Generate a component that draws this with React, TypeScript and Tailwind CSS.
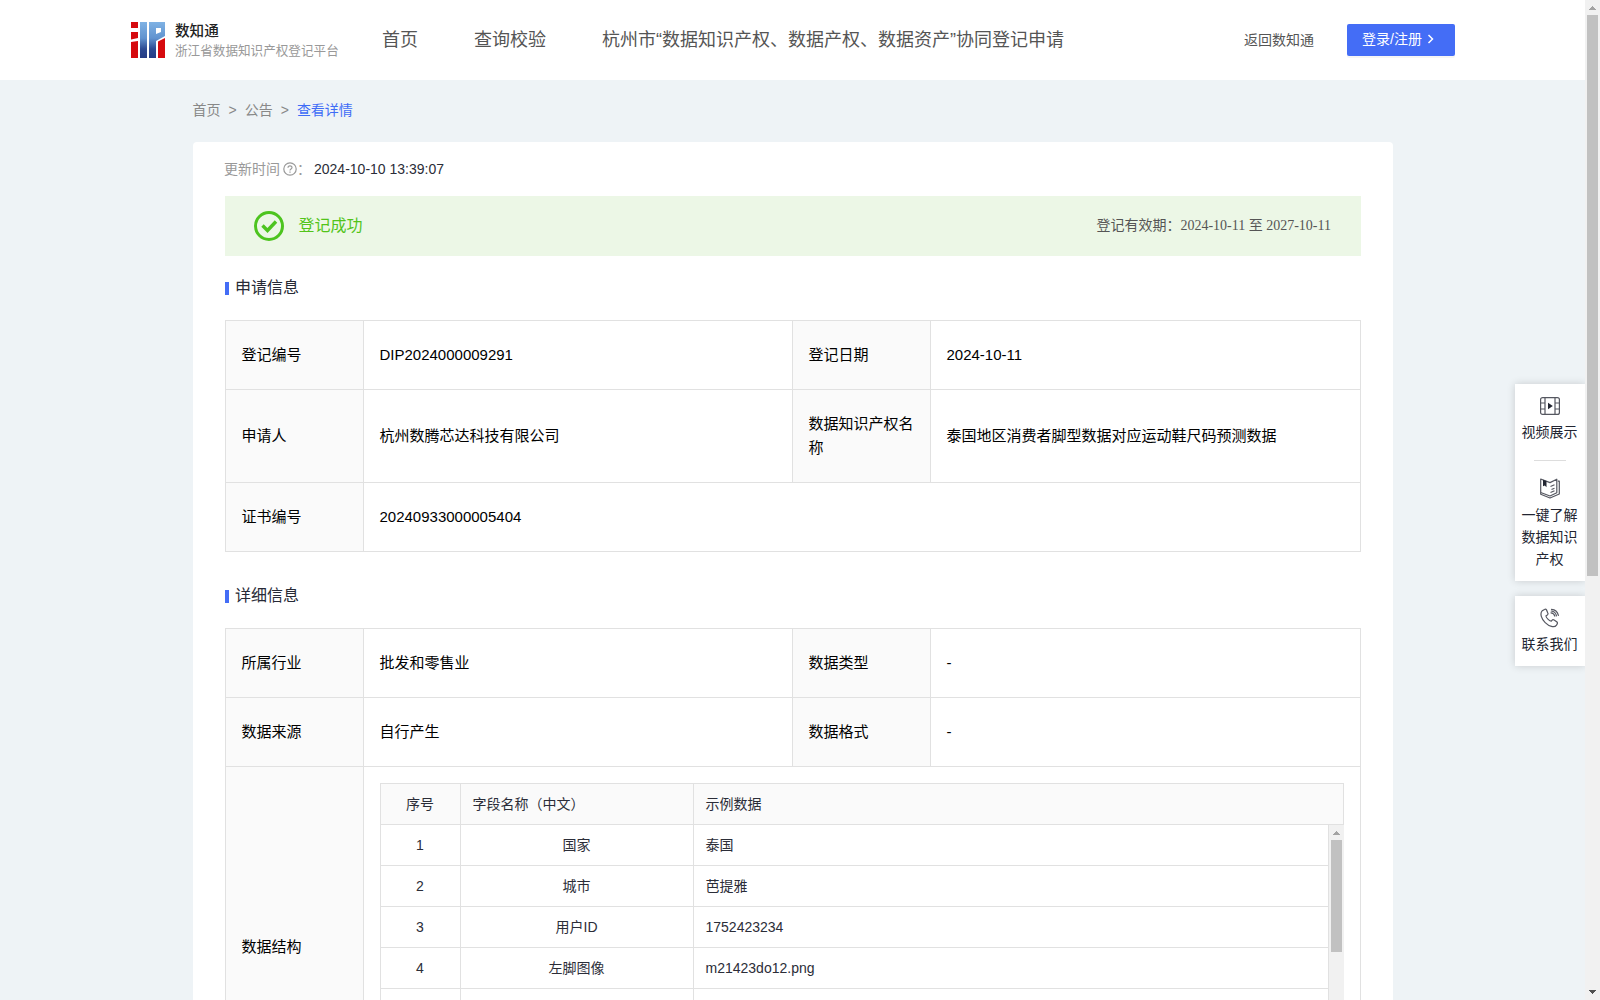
import React from "react";

function Logo() {
  return (
    <svg width="34" height="36" viewBox="0 0 34 36" className="shrink-0">
      <defs>
        <linearGradient id="blue" x1="0" y1="0" x2="0" y2="1">
          <stop offset="0" stopColor="#7fb2e4" />
          <stop offset="0.450" stopColor="#6193cf" />
          <stop offset="0.750" stopColor="#2c4a93" />
          <stop offset="1" stopColor="#253c85" />
        </linearGradient>
      </defs>
      <path d="M0 0h7v6H0zM0 10h7v6l-7 1.500zM0 20l7-1v17H0z" fill="#d60a0e" />
      <path d="M9 0h7v36H9zM18 0h16v14l-9 5v17h-7zM25 6v6l5-2V6z" fill="url(#blue)" fillRule="evenodd" />
      <path d="M27 19.500l7-3.500V36h-7z" fill="#d60a0e" />
    </svg>
  );
}

function Header() {
  return (
    <header className="flex h-20 items-center bg-white pl-[131px] text-[#555]">
      <Logo />
      <div className="mt-px ml-[10px] w-[207px] whitespace-nowrap">
        <div className="text-[14.6px] leading-5 font-medium text-[#222]">数知通</div>
        <div className="text-[12.6px] leading-5 text-[#999]">浙江省数据知识产权登记平台</div>
      </div>
      <nav className="flex w-[862px] gap-[56px] text-lg leading-6 whitespace-nowrap">
        <span>首页</span>
        <span>查询校验</span>
        <span>杭州市“数据知识产权、数据产权、数据资产”协同登记申请</span>
      </nav>
      <span className="-mt-px w-[103px] text-sm">返回数知通</span>
      <button className="flex h-8 w-[108px] items-center rounded-[2px] bg-[#446df6] pb-0.5 pl-[15px] text-sm text-white shadow-[0_2px_0_rgba(0,0,0,0.04)]">
        登录/注册
        <svg width="8" height="10" viewBox="0 0 8 10" className="ml-[5px]" fill="none" stroke="currentColor" strokeWidth="1.500">
          <path d="M1.500 1l4 4-4 4" />
        </svg>
      </button>
    </header>
  );
}

function SectionTitle({ children }: { children: string }) {
  return (
    <div className="flex h-6 items-center">
      <span className="mt-[3px] h-[13px] w-1 bg-[#446df6]" />
      <span className="mt-px ml-[6px] text-base leading-6 text-[#272a36]">{children}</span>
    </div>
  );
}

const cell = "flex items-center border-r border-b border-[#e1e1e1] pr-3 pl-[15.5px] pb-px text-[15px] leading-6 text-black";
const labelCell = "bg-[#fafafa]";

function Row({ items, className }: { items: [string, string][]; className: string }) {
  return (
    <div className={"flex " + className}>
      {items.map(([label, value], i) => (
        <React.Fragment key={label}>
          <div className={`${cell} ${labelCell} w-[138px] shrink-0`}>{label}</div>
          <div className={`${cell} ${items.length === 1 ? "flex-1" : i === 0 ? "w-[429px]" : "flex-1"}`}>{value}</div>
        </React.Fragment>
      ))}
    </div>
  );
}

const fields = [
  ["1", "国家", "泰国"],
  ["2", "城市", "芭提雅"],
  ["3", "用户ID", "1752423234"],
  ["4", "左脚图像", "m21423do12.png"],
  ["", "", ""],
];

function FieldTable() {
  const line = "flex items-center border-r border-b border-[#e1e1e1] ";
  return (
    <div className="w-[964px] border-t border-l border-[#e1e1e1] text-sm text-[#2b2d38]">
      <div className="flex h-[41px] bg-[#fafafa]">
        <div className={line + "w-20 justify-center pr-px"}>序号</div>
        <div className={line + "w-[233px] pl-[11.5px]"}>字段名称（中文）</div>
        <div className={line + "flex-1 pl-[11.5px]"}>示例数据</div>
      </div>
      <div className="flex">
        <div className="flex-1">
          {fields.map(([n, name, sample]) => (
            <div key={n} className="flex h-[41px]">
              <div className={line + "w-20 justify-center pr-px"}>{n}</div>
              <div className={line + "w-[233px] justify-center pr-px"}>{name}</div>
              <div className={line + "flex-1 pl-[11.5px]"}>{sample}</div>
            </div>
          ))}
        </div>
        <div className="flex w-[15px] flex-col items-center bg-[#f1f1f1] pt-[6px]">
          <Arrow className="text-[#a3a3a3]" />
          <div className="mt-[5px] h-[112px] w-[11px] bg-[#c1c1c1]" />
        </div>
      </div>
    </div>
  );
}

function Arrow({ className }: { className: string }) {
  return (
    <svg width="7" height="4" viewBox="0 0 7 4" className={className} fill="currentColor" shapeRendering="crispEdges">
      <path d="M3 0h1v1h1v1h1v1h1v1H0V3h1V2h1V1h1z" />
    </svg>
  );
}

function VideoIcon() {
  return (
    <svg width="20" height="18" viewBox="0 0 20 18" fill="none" stroke="#555760" strokeWidth="1.200">
      <rect x="0.600" y="0.600" width="18.800" height="16.800" rx="2" />
      <path d="M5 .6v16.800M15 .6v16.800M.6 6H5M.6 12H5M15 6h4.400M15 12h4.400" />
      <path d="M8 5.800v6.400L12.800 9z" fill="#222531" stroke="none" />
    </svg>
  );
}

function BookIcon() {
  return (
    <svg width="20" height="21" viewBox="0 0 20 21" fill="none" stroke="#555760" strokeWidth="1.200" strokeLinejoin="round">
      <path d="M.7 1L10 4.600l6.800-3.400v13.600L10 18 .7 14.500z" />
      <path d="M.7 14.500v1.800L10 20l9.300-4V3.200h-1.500M10.500 8.500l4-1.700M11.500 11.500l3-1.300M10.500 14.500l4-1.700" />
      <path d="M3 1.800l3.500 1.300v6.100L4.800 7.600 3 8.300z" fill="#222531" stroke="none" />
    </svg>
  );
}

function PhoneIcon() {
  return (
    <svg width="20" height="20" viewBox="0 0 20 20" fill="none" stroke="#555760" strokeWidth="1.200" strokeLinecap="round">
      <path d="M4.500 1.500L2.300 2.700C-.5 5.500 1.500 11 5.200 14.600c3.800 3.700 9.200 5.700 11.300 2.500l.7-1.200c.5-.9.200-1.600-.5-2.200l-2.600-1.800c-.8-.5-1.500-.4-2 .3l-.8 1c-1.600 0-5-3.200-5.400-5.200l1.400-1c.8-.6.9-1.300.5-2L6.500 1.900c-.5-.8-1.200-.9-2-.4z" />
      <path d="M11 4.800c2 .2 3.300 1.400 3.800 3.400M11.500 1.300c3.500.3 6 2.500 6.900 6M11.300 3c2.800.3 4.500 2 5.200 4.800" />
    </svg>
  );
}

function SidePanels() {
  const panel = "flex w-[70px] flex-col items-center bg-white text-center text-sm leading-[22px] text-[#222531] shadow-[0_0_8px_rgba(0,0,0,0.16)]";
  return (
    <div className="absolute top-[384px] right-0 -mt-3 overflow-hidden py-3 pl-3">
      <div className={panel + " h-[197px] pt-[13px]"}>
        <VideoIcon />
        <div className="mt-[6px] pr-px">视频展示</div>
        <div className="mt-[17px] h-px w-8 shrink-0 bg-[#ddd]" />
        <div className="mt-[17px] h-[21px]"><BookIcon /></div>
        <div className="mt-[5px] w-[58px] pr-px">一键了解数据知识产权</div>
      </div>
      <div className={panel + " mt-[15px] h-[70px] pt-[12px]"}>
        <PhoneIcon />
        <div className="mt-[5px] pr-px">联系我们</div>
      </div>
    </div>
  );
}

export default function App() {
  return (
    <div className="flex h-[1000px] w-[1600px] overflow-hidden bg-[#eef3f6] font-['Liberation_Sans','Noto_Sans_CJK_SC',sans-serif]">
      <div className="relative h-[1000px] w-[1585px] overflow-hidden">
        <Header />
        <div className="ml-[192.500px] flex h-[62px] items-center gap-2 pb-0.5 text-sm text-[#888]">
          <span>首页</span>
          <span>&gt;</span>
          <span>公告</span>
          <span>&gt;</span>
          <span className="text-[#3f6cf6]">查看详情</span>
        </div>
        <main className="ml-[193px] h-[1100px] w-[1200px] rounded-[4px] bg-white px-8 pt-4">
          <div className="flex h-[22px] items-center text-sm text-[#999]">
            <span className="-ml-px">更新时间</span>
            <svg width="14" height="14" viewBox="0 0 14 14" className="ml-[3px]" fill="none" stroke="currentColor" strokeWidth="1.200">
              <circle cx="7" cy="7" r="6.200" />
              <path d="M5 5.800C5 3.300 9 3.300 9 5.600 9 7 7 7 7 8.500M7 9.500v1.200" />
            </svg>
            <span className="w-[17px]">：</span>
            <span className="text-[#2b2d38]">2024-10-10 13:39:07</span>
          </div>
          <div className="mt-4 flex h-[60px] items-center bg-[#ecf7e6] pr-[30px] pl-[29px]">
            <svg width="30" height="30" viewBox="0 0 30 30" fill="none" stroke="#4dc41f">
              <circle cx="15" cy="15" r="13.500" strokeWidth="3" />
              <path d="M8.500 14.500l5 5 8.500-9" strokeWidth="3.400" />
            </svg>
            <span className="ml-[14.5px] text-base text-[#52c41a]">登记成功</span>
            <span className="ml-auto font-['Liberation_Serif','Noto_Sans_CJK_SC',serif] text-sm text-[#555]">
              登记有效期：2024-10-11 至 2027-10-11
            </span>
          </div>
          <div className="mt-[19px]"><SectionTitle>申请信息</SectionTitle></div>
          <div className="mt-[21px] border-t border-l border-[#e1e1e1]">
            <Row className="h-[69px]" items={[["登记编号", "DIP2024000009291"], ["登记日期", "2024-10-11"]]} />
            <Row className="h-[93px]" items={[["申请人", "杭州数腾芯达科技有限公司"], ["数据知识产权名称", "泰国地区消费者脚型数据对应运动鞋尺码预测数据"]]} />
            <Row className="h-[69px]" items={[["证书编号", "20240933000005404"]]} />
          </div>
          <div className="mt-[31px]"><SectionTitle>详细信息</SectionTitle></div>
          <div className="mt-[21px] border-t border-l border-[#e1e1e1]">
            <Row className="h-[69px]" items={[["所属行业", "批发和零售业"], ["数据类型", "-"]]} />
            <Row className="h-[69px]" items={[["数据来源", "自行产生"], ["数据格式", "-"]]} />
            <div className="flex h-[362px]">
              <div className={`${cell} ${labelCell} w-[138px] shrink-0`}>数据结构</div>
              <div className="flex-1 border-r border-b border-[#e1e1e1] px-4 pt-4">
                <FieldTable />
              </div>
            </div>
          </div>
        </main>
        <SidePanels />
      </div>
      <div className="flex h-[1000px] w-[15px] flex-col items-center bg-[#f1f1f1] py-[6px]">
        <Arrow className="text-[#a3a3a3]" />
        <div className="mt-[5px] h-[561px] w-[11px] bg-[#c1c1c1]" />
        <Arrow className="mt-auto rotate-180 text-[#505050]" />
      </div>
    </div>
  );
}
